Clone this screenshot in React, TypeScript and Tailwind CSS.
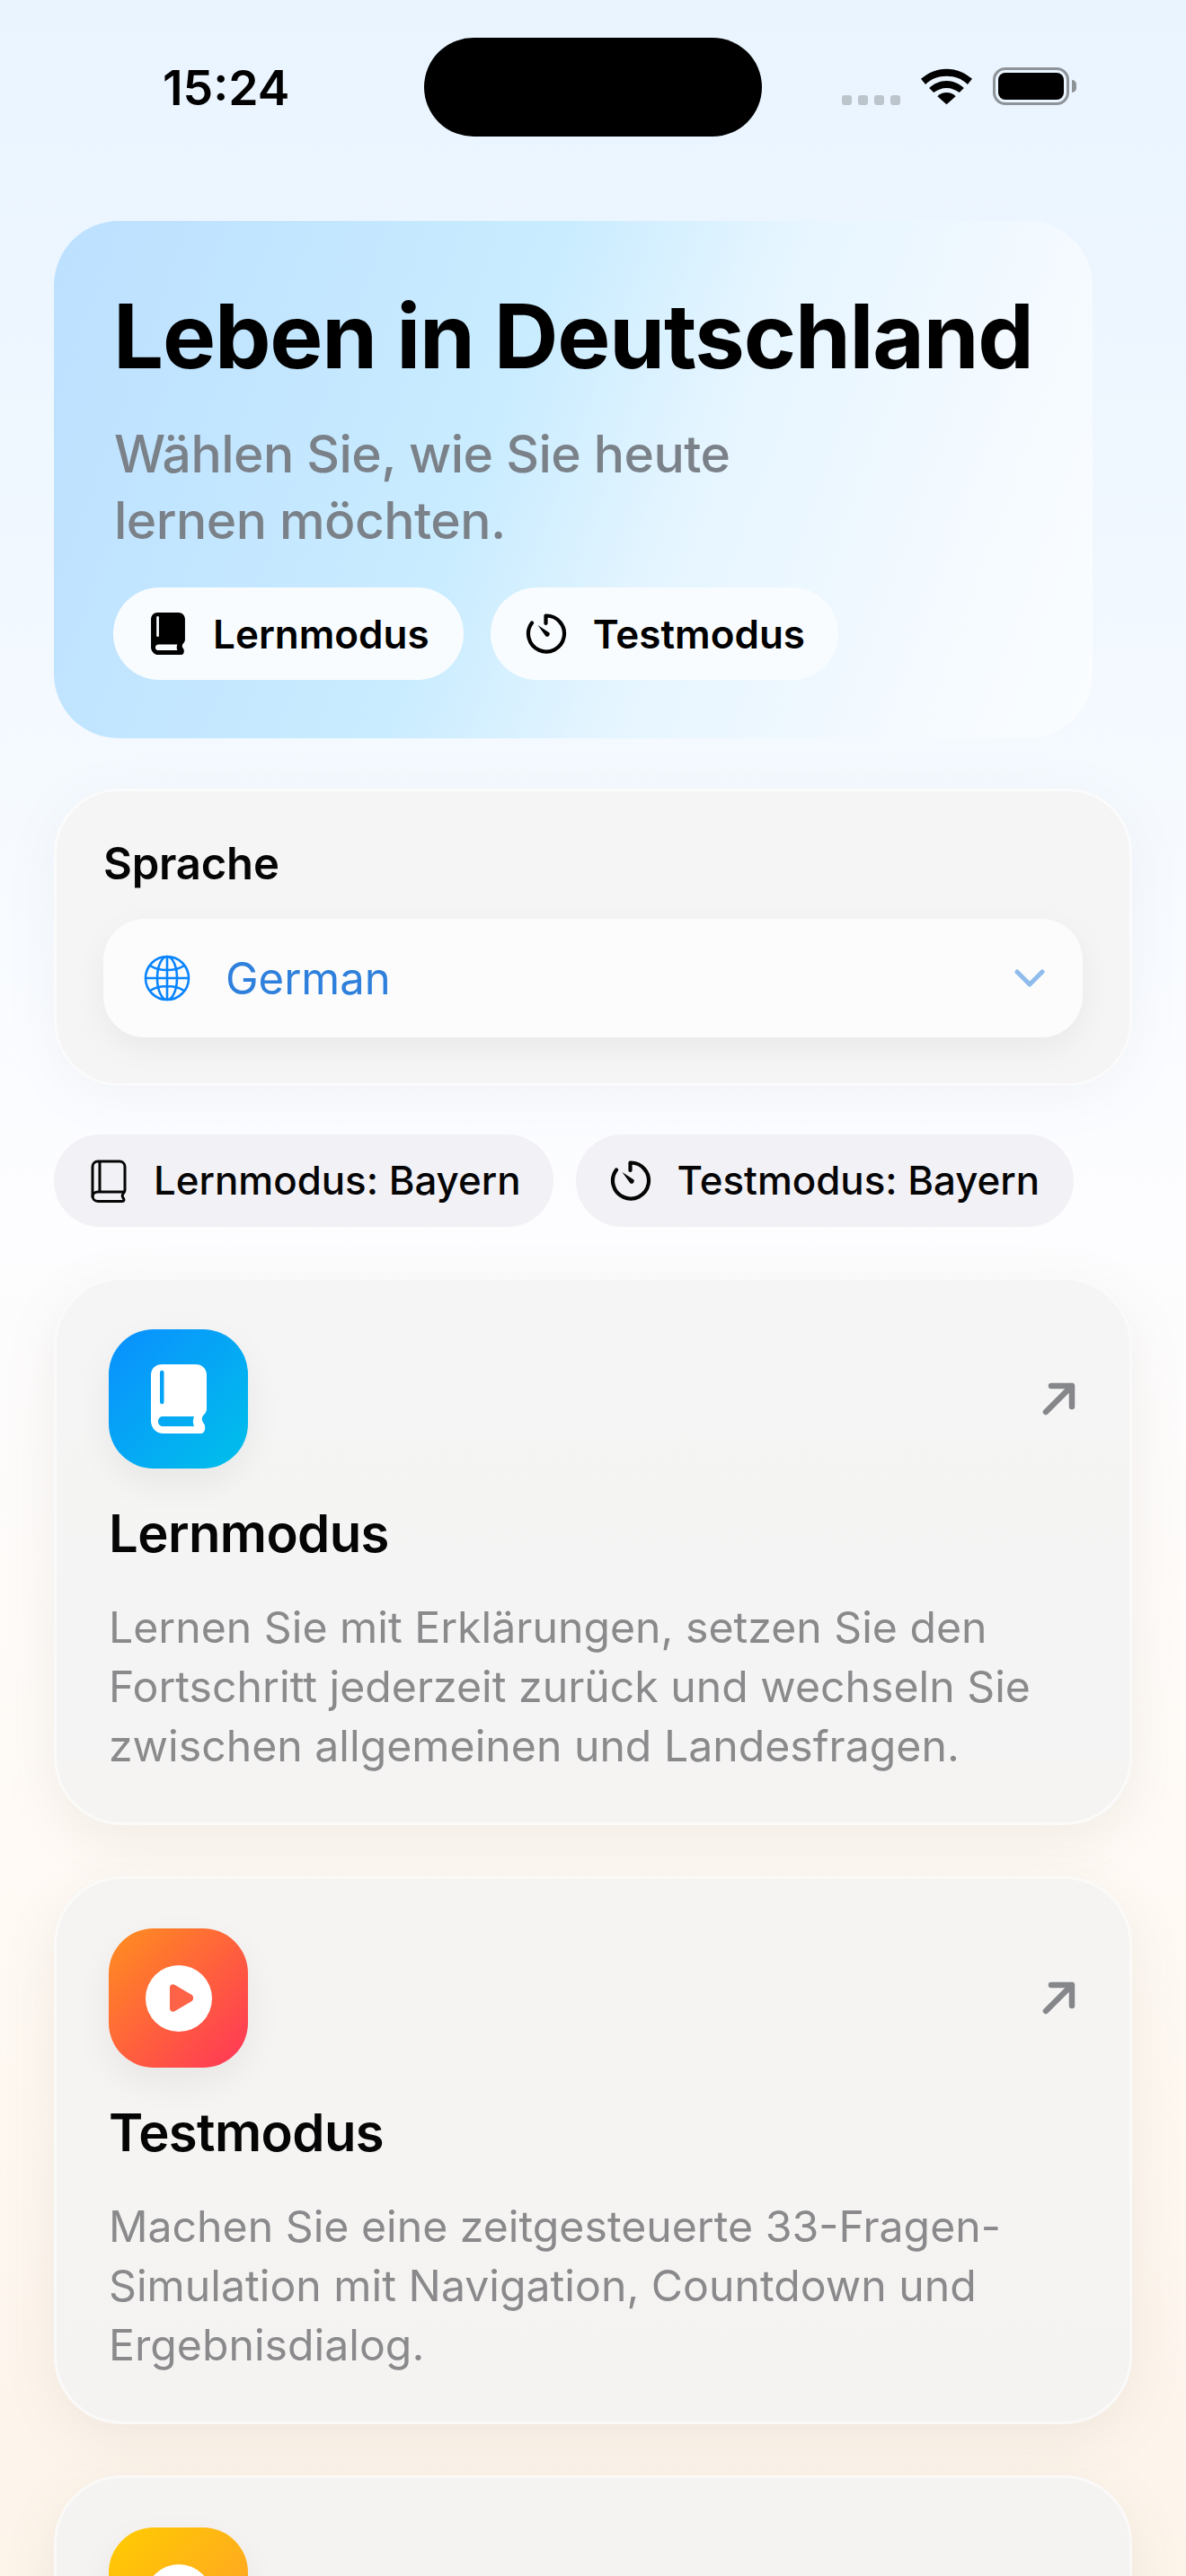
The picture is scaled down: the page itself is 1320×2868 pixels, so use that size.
import type { ReactNode } from "react";

const font = "font-['Inter','Noto_Sans',sans-serif]";

function BookSolid({ className }: { className?: string }) {
  return (
    <svg viewBox="0 0 62 77" className={className} fill="currentColor">
      <path
        fillRule="evenodd"
        d="M12 0h38c7 0 12 5 12 12v37c0 3-1 5-3 7-3 3-3 6 0 10 2 3 2 11-4 11H14C6 77 0 71 0 63V12C0 5 5 0 12 0Zm-2 9v33a2.200 2.200 0 0 0 4.500 0V9a2.200 2.200 0 0 0-4.500 0Zm4 49c-4 0-6 2-6 5.500S10 69 14 69h34c-1.500-3.500-1.500-7.500 0-11Z"
      />
    </svg>
  );
}

function BookOutline({ className }: { className?: string }) {
  return (
    <svg viewBox="0 0 40 48" className={className} fill="none" stroke="currentColor" strokeWidth="3" strokeLinejoin="round" strokeLinecap="round">
      <path d="M8 2h24c3.500 0 6 2.500 6 6v26c0 1.500-.5 2.500-1.500 3.500-1.500 1.500-1.500 4 0 6 1 1.500.5 3-1.500 3H8c-3.500 0-6-2.500-6-6V8c0-3.500 2.500-6 6-6Z" />
      <path d="M37 36H8c-3.500 0-6 2-6 5" />
      <path d="M10 3v32" />
    </svg>
  );
}

function Timer({ className }: { className?: string }) {
  return (
    <svg viewBox="0 0 46 48" className={className} fill="none">
      <path
        d="M22.500 12V3.500A20 20 0 1 1 7 11.500"
        stroke="currentColor"
        strokeWidth="4.200"
        strokeLinecap="round"
        strokeLinejoin="round"
      />
      <path d="M13.500 14 26.500 22.500a3 3 0 0 1-4 4Z" fill="currentColor" />
    </svg>
  );
}

function Globe({ className }: { className?: string }) {
  return (
    <svg viewBox="0 0 52 52" className={className} fill="none" stroke="currentColor" strokeWidth="2.600">
      <circle cx="26" cy="26" r="24" />
      <ellipse cx="26" cy="26" rx="11" ry="24" />
      <path d="M26 2v48M2 26h48M7 12c5 3.500 12 5 19 5s14-1.500 19-5M7 40c5-3.500 12-5 19-5s14 1.500 19 5" />
    </svg>
  );
}

function Arrow({ className }: { className?: string }) {
  return (
    <svg viewBox="0 0 38 38" className={className} fill="none" stroke="currentColor" strokeWidth="6.500" strokeLinecap="round" strokeLinejoin="round">
      <path d="M5 33 34 4M11 4h23v23" />
    </svg>
  );
}

function PlayBadge() {
  return (
    <span className="flex h-[74px] w-[74px] items-center justify-center rounded-full bg-white">
      <svg viewBox="0 0 28 32" className="ml-[6px] h-[31px] w-[27px]" fill="#ff6347">
        <path d="M1 4c0-3 3-5 6-3l19 11c3 2 3 6 0 8L7 31c-3 2-6 0-6-3Z" />
      </svg>
    </span>
  );
}

function StatusBar() {
  return (
    <div className="relative h-[246px]">
      <span className="absolute left-[181px] top-[73px] text-[53.5px] font-semibold leading-[50px] text-black">15:24</span>
      <div className="absolute left-[472px] top-[42px] h-[110px] w-[376px] rounded-full bg-black" />
      <div className="absolute left-[937px] top-[106px] flex gap-[7px]">
        <span className="h-[11px] w-[11px] rounded-[3px] bg-[#bcc4cc]" />
        <span className="h-[11px] w-[11px] rounded-[3px] bg-[#bcc4cc]" />
        <span className="h-[11px] w-[11px] rounded-[3px] bg-[#bcc4cc]" />
        <span className="h-[11px] w-[11px] rounded-[3px] bg-[#bcc4cc]" />
      </div>
      <svg viewBox="0 0 56 39" className="absolute left-[1025px] top-[76px] h-[41px] w-[57px]" fill="#000">
        <path d="M28 0C17 0 8 4 0 11l5 6c6-6 14-9 23-9s17 3 23 9l5-6C48 4 39 0 28 0Z" />
        <path d="M28 13c-7 0-14 3-19 8l5 5c4-3 9-5 14-5s10 2 14 5l5-5c-5-5-12-8-19-8Z" />
        <path d="M28 26c-4 0-7 1-10 4l10 9 10-9c-3-3-6-4-10-4Z" />
      </svg>
      <div className="absolute left-[1105px] top-[75px] flex items-center">
        <div className="h-[42px] w-[85px] rounded-[14px] border-[3px] border-[#8e9398] p-[3px]">
          <div className="h-full w-full rounded-[8px] bg-black" />
        </div>
        <span className="ml-[3px] h-[14px] w-[5px] rounded-r-full bg-[#8e9398]" />
      </div>
    </div>
  );
}

function HeroPill({ icon, label, className }: { icon: ReactNode; label: string; className: string }) {
  return (
    <div className={`flex h-[103px] items-center rounded-full bg-[#f8fcff] ${className}`}>
      {icon}
      <span className="text-[44px] font-semibold leading-none text-black">{label}</span>
    </div>
  );
}

function Chip({ icon, label, className }: { icon: ReactNode; label: string; className: string }) {
  return (
    <div className={`flex h-[103px] items-center rounded-full bg-[#f2f1f6] text-[#050505] ${className}`}>
      {icon}
      <span className="text-[43.8px] font-medium leading-none">{label}</span>
    </div>
  );
}

function ModeCard({
  icon,
  iconClass,
  title,
  lines,
}: {
  icon: ReactNode;
  iconClass: string;
  title?: string;
  lines?: string[];
}) {
  return (
    <div className="mx-[60px] h-[610px] rounded-[76px] border-[3px] border-white/50 bg-[#f3f3f3]/80 px-[58px] pt-[55px] shadow-[0_16px_60px_rgba(120,105,90,0.1)]">
      <div className="flex items-start justify-between">
        <div className={`flex h-[155px] w-[155px] items-center justify-center rounded-[50px] shadow-[0_16px_40px_rgba(0,0,0,0.06)] ${iconClass}`}>
          {icon}
        </div>
        <Arrow className="mr-[2px] mt-[59px] h-[38px] w-[38px] text-[#85878a]" />
      </div>
      {title && <h2 className="mt-[37px] text-[58px] font-semibold leading-[70px] tracking-[-0.6px] text-[#050505]">{title}</h2>}
      {lines && (
        <p className="mt-[37px] text-[48.2px] leading-[66px] text-[#8a8a8c]">
          {lines.map((line) => (
            <span key={line} className="block whitespace-nowrap">
              {line}
            </span>
          ))}
        </p>
      )}
    </div>
  );
}

export default function App() {
  return (
    <div className={`${font} h-[2868px] w-[1320px] overflow-hidden bg-[linear-gradient(180deg,#e9f4ff_0%,#f1f8ff_22%,#fdfdff_47%,#fffaf5_72%,#fdf4ea_100%)]`}>
      <StatusBar />

      <section className="ml-[60px] h-[576px] w-[1156px] rounded-[72px] bg-[linear-gradient(110deg,#bce0ff_0%,#c9ecff_42%,#e5f5ff_60%,#f2f9ff_80%,#fbfdff_100%)] px-[66px] pt-[76px]">
        <h1 className="whitespace-nowrap text-[99.3px] font-bold leading-[104px] tracking-[-1.2px] text-black">Leben in Deutschland</h1>
        <p className="ml-[1px] mt-[43px] text-[57px] font-medium leading-[74px] tracking-[-0.55px] text-[#7b8188]">
          Wählen Sie, wie Sie heute
          <br />
          lernen möchten.
        </p>
        <div className="mt-[37px] flex gap-[30px]">
          <HeroPill
            icon={<BookSolid className="mr-[31px] h-[47px] w-[38px] text-black" />}
            label="Lernmodus"
            className="pl-[42px] pr-[38px]"
          />
          <HeroPill
            icon={<Timer className="mr-[29px] h-[48px] w-[46px] text-black" />}
            label="Testmodus"
            className="pl-[39px] pr-[37px]"
          />
        </div>
      </section>

      <section className="mx-[60px] mt-[56px] h-[331px] rounded-[72px] border-[3px] border-white/60 bg-[#f4f5f4] px-[52px] pt-[53px] shadow-[0_12px_60px_rgba(120,130,140,0.07)]">
        <h2 className="text-[49px] font-semibold leading-[56px] tracking-[-0.2px] text-[#050505]">Sprache</h2>
        <div className="mt-[33px] flex h-[132px] items-center rounded-[46px] bg-[#fcfcfc] pl-[45px] pr-[42px] shadow-[0_12px_36px_rgba(0,0,0,0.05)]">
          <Globe className="h-[52px] w-[52px] text-[#0a84ff]" />
          <span className="ml-[39px] flex-1 text-[49px] leading-none text-[#2f80dc]">German</span>
          <svg viewBox="0 0 34 20" className="h-[20px] w-[34px]" fill="none" stroke="#8fbcec" strokeWidth="5" strokeLinecap="round" strokeLinejoin="round">
            <path d="M3 3l14 14L31 3" />
          </svg>
        </div>
      </section>

      <div className="mx-[60px] mt-[54px] flex gap-[25px]">
        <Chip icon={<BookOutline className="mr-[30px] h-[48px] w-[40px]" />} label="Lernmodus: Bayern" className="pl-[41px] pr-[36px]" />
        <Chip icon={<Timer className="mr-[29px] h-[48px] w-[46px]" />} label="Testmodus: Bayern" className="pl-[38px] pr-[38px]" />
      </div>

      <div className="mt-[56px] flex flex-col gap-[57px]">
        <ModeCard
          icon={<BookSolid className="h-[77px] w-[62px] text-white" />}
          iconClass="bg-[linear-gradient(135deg,#0a8fff,#00c0ea)]"
          title="Lernmodus"
          lines={[
            "Lernen Sie mit Erklärungen, setzen Sie den",
            "Fortschritt jederzeit zurück und wechseln Sie",
            "zwischen allgemeinen und Landesfragen.",
          ]}
        />
        <ModeCard
          icon={<PlayBadge />}
          iconClass="bg-[linear-gradient(135deg,#ff8f1f,#ff3558)]"
          title="Testmodus"
          lines={[
            "Machen Sie eine zeitgesteuerte 33-Fragen-",
            "Simulation mit Navigation, Countdown und",
            "Ergebnisdialog.",
          ]}
        />
        <ModeCard icon={<PlayBadge />} iconClass="bg-[linear-gradient(135deg,#ffcc00,#ff9a2e)]" />
      </div>
    </div>
  );
}
